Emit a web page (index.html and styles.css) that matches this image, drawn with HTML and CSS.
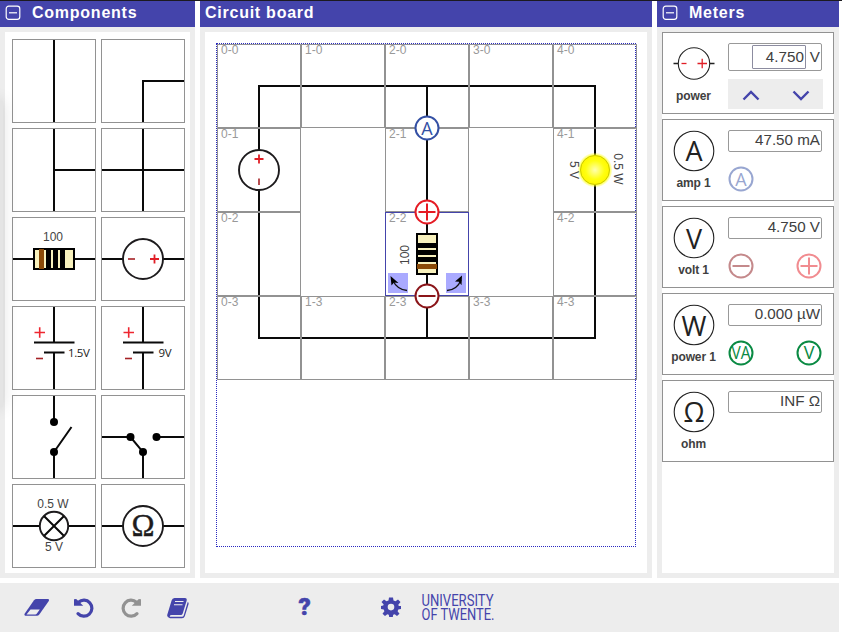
FILE: index.html
```
<!DOCTYPE html>
<html lang="en">
<head>
<meta charset="utf-8">
<title>Circuit lab</title>
<link rel="stylesheet" href="styles.css">
</head>
<body>
<svg class="defs" aria-hidden="true">
  <defs>
    <radialGradient id="glow"><stop offset="0" stop-color="#ffffb0"/><stop offset=".65" stop-color="#ffff10"/><stop offset="1" stop-color="#fff700"/></radialGradient>
    <radialGradient id="halo"><stop offset=".8" stop-color="#ffff20"/><stop offset="1" stop-color="#ffff20" stop-opacity="0"/></radialGradient>
    <g id="wire-v"><path class="wire" d="M0-41V41"/></g>
    <g id="wire-h"><path class="wire" d="M-41 0H41"/></g>
    <g id="corner"><path class="wire" d="M0 41V0H41"/></g>
    <g id="tee"><path class="wire" d="M-41 0H41M0 0V41"/></g>
    <g id="resistor">
      <path class="wire" d="M-41 0H41"/>
      <rect x="-20" y="-10" width="40" height="20" fill="#f8f1bd" stroke="#000" stroke-width="2"/>
      <path fill="#8b4a08" d="M-15-10h5v20h-5z"/>
      <path d="M-8-10h5v20h-5zM-1-10h5v20h-5zM6-10h5v20H6z"/>
      <text class="part" x="-1" y="-18">100</text>
    </g>
  </defs>
</svg>
<main class="workspace">
  <section class="panel panel-parts">
    <h2 class="title"><svg class="toggle" viewBox="0 0 16 16"><rect x="1.2" y="1.2" width="13.6" height="13.2" rx="2.6"/><path d="M4 7.8h8"/></svg>Components</h2>
    <div class="parts">
      <div class="tile"><svg viewBox="-41 -41 82 82"><use href="#wire-v"/></svg></div>
      <div class="tile"><svg viewBox="-41 -41 82 82"><use href="#corner"/></svg></div>
      <div class="tile"><svg viewBox="-41 -41 82 82"><path class="wire" d="M0-41V41M0 0H41"/></svg></div>
      <div class="tile"><svg viewBox="-41 -41 82 82"><path class="wire" d="M0-41V41M-41 0H41"/></svg></div>
      <div class="tile"><svg viewBox="-41 -41 82 82"><use href="#resistor"/></svg></div>
      <div class="tile"><svg viewBox="-41 -41 82 82"><path class="wire" d="M-41 0H41"/><circle class="body" r="20"/><path class="minus" d="M-15 0h7"/><path class="plus" d="M7 0h9M11.500-4.500v9"/></svg></div>
      <div class="tile"><svg viewBox="-41 -41 82 82"><path class="wire" d="M0-41V-6M0 5V41M-20-5.500H20.500M-10 4.500H10.500"/><path class="pole" d="M-19.500-15.500h10.500M-14.300-20.800v10.600"/><path class="minus" d="M-18 10.500h7"/><text class="volts" x="14" y="9">1.5V</text></svg></div>
      <div class="tile"><svg viewBox="-41 -41 82 82"><path class="wire" d="M0-41V-6M0 5V41M-20-5.500H20.500M-10 4.500H10.500"/><path class="pole" d="M-19.500-15.500h10.500M-14.300-20.800v10.600"/><path class="minus" d="M-18 10.500h7"/><text class="volts" x="15.500" y="9">9V</text></svg></div>
      <div class="tile"><svg viewBox="-41 -41 82 82"><path class="wire" d="M0-41V-15M0 41V15L17.500-10"/><circle cy="-15" r="4"/><circle cy="15" r="4"/></svg></div>
      <div class="tile"><svg viewBox="-41 -41 82 82"><path class="wire" d="M-41 0H-12.500L0 15V41M13.500 0H41"/><circle cx="-12.500" r="4"/><circle cx="13.500" r="4"/><circle cy="15" r="4"/></svg></div>
      <div class="tile"><svg viewBox="-41 -41 82 82"><path class="wire" d="M-41 0H41"/><circle class="body" r="14.200"/><path class="wire" d="M-9.800-9.800 9.800 9.800M9.800-9.800-9.800 9.800"/><text class="part" x="-1" y="-18">0.5 W</text><text class="part" x="0" y="25">5 V</text></svg></div>
      <div class="tile"><svg viewBox="-41 -41 82 82"><path class="wire" d="M-41 0H41"/><circle class="body" r="20"/><text class="omega" y="9.500">Ω</text></svg></div>
    </div>
  </section>

  <section class="panel panel-board">
    <h2 class="title">Circuit board</h2>
    <div class="board">
      <div class="field">
        <div class="grid">
          <div class="cell"><span>0-0</span><svg viewBox="-41 -41 82 82"><use href="#corner"/></svg></div>
          <div class="cell"><span>1-0</span><svg viewBox="-41 -41 82 82"><use href="#wire-h"/></svg></div>
          <div class="cell"><span>2-0</span><svg viewBox="-41 -41 82 82"><use href="#tee"/></svg></div>
          <div class="cell"><span>3-0</span><svg viewBox="-41 -41 82 82"><use href="#wire-h"/></svg></div>
          <div class="cell"><span>4-0</span><svg viewBox="-41 -41 82 82"><use href="#corner" transform="rotate(90)"/></svg></div>

          <div class="cell"><span>0-1</span><svg viewBox="-41 -41 82 82"><use href="#wire-v"/><circle class="body" r="20"/><path class="plus" d="M-4.500-11h9M0-15.500v9"/><path class="minus" d="M0 8.500v6.500"/></svg></div>
          <div></div>
          <div class="cell"><span>2-1</span><svg viewBox="-41 -41 82 82"><use href="#wire-v"/></svg></div>
          <div></div>
          <div class="cell"><span>4-1</span><svg viewBox="-41 -41 82 82"><use href="#wire-v"/><circle r="17.500" fill="url(#halo)"/><circle r="14.500" fill="url(#glow)" stroke="#c9c900"/><g transform="rotate(90)"><text class="part" x="-1" y="-18.500">0.5 W</text><text class="part" x="0" y="25">5 V</text></g></svg></div>

          <div class="cell"><span>0-2</span><svg viewBox="-41 -41 82 82"><use href="#wire-v"/></svg></div>
          <div></div>
          <div class="cell selected"><span>2-2</span><svg viewBox="-41 -41 82 82"><use href="#resistor" transform="rotate(-90)"/>
            <path class="rotate-bg" d="M-39 19h20v20h-20zM19 19h20v20H19z"/>
            <path class="rotate-arc" d="M-20 36.500C-28 36-32 31-34.500 26M20 36.500C28 36 32 31 34 26"/>
            <path d="M-36.500 22l1 9.500 2.500-3 4.500.500zM35 21.500l-7 6 4 .300 2.500 3.500z"/></svg></div>
          <div></div>
          <div class="cell"><span>4-2</span><svg viewBox="-41 -41 82 82"><use href="#wire-v"/></svg></div>

          <div class="cell"><span>0-3</span><svg viewBox="-41 -41 82 82"><use href="#corner" transform="rotate(-90)"/></svg></div>
          <div class="cell"><span>1-3</span><svg viewBox="-41 -41 82 82"><use href="#wire-h"/></svg></div>
          <div class="cell"><span>2-3</span><svg viewBox="-41 -41 82 82"><use href="#tee" transform="rotate(180)"/></svg></div>
          <div class="cell"><span>3-3</span><svg viewBox="-41 -41 82 82"><use href="#wire-h"/></svg></div>
          <div class="cell"><span>4-3</span><svg viewBox="-41 -41 82 82"><use href="#corner" transform="rotate(180)"/></svg></div>
        </div>
        <svg class="probe pin-amp blue" viewBox="-13 -13 26 26"><circle r="11.500"/><text y="6.500">A</text></svg>
        <svg class="probe pin-plus red" viewBox="-13 -13 26 26"><circle r="11.500"/><path d="M-8.500 0h17M0-8.500v17"/></svg>
        <svg class="probe pin-minus maroon" viewBox="-13 -13 26 26"><circle r="11.500"/><path d="M-8.500 0h17"/></svg>
      </div>
    </div>
  </section>

  <section class="panel panel-meters">
    <h2 class="title"><svg class="toggle" viewBox="0 0 16 16"><rect x="1.200" y="1.200" width="13.600" height="13.200" rx="2.600"/><path d="M4 7.800h8"/></svg>Meters</h2>
    <div class="meters">
      <div class="meter">
        <div class="face"><svg viewBox="-21 -21 42 42"><path class="lead" d="M-20.500-.500h4.500M16-.500h4.500"/><circle class="dial" cy="-.500" r="15.700"/><path class="minus thin" d="M-12.500-.500h5"/><path class="plus thin" d="M3.500-.500h9.500M8.200-5.200v9.500"/></svg><b>power</b></div>
        <div class="side"><div class="display tall"><span class="entry">4.750</span><span>V</span></div>
          <div class="stepper"><svg viewBox="0 0 18 11"><path d="M1.500 9.500 9 2l7.500 7.500"/></svg><svg viewBox="0 0 18 11"><path d="M1.500 1.500 9 9l7.500-7.500"/></svg></div></div>
      </div>
      <div class="meter">
        <div class="face"><svg viewBox="-21 -21 42 42"><circle class="dial" r="19.800"/><text y="9.800">A</text></svg><b>amp 1</b></div>
        <div class="side"><div class="display">47.50 mA</div>
          <div class="probes"><svg class="probe blue dim" viewBox="-13 -13 26 26"><circle r="11.500"/><text y="6.500">A</text></svg></div></div>
      </div>
      <div class="meter">
        <div class="face"><svg viewBox="-21 -21 42 42"><circle class="dial" r="19.800"/><text y="11">V</text></svg><b>volt 1</b></div>
        <div class="side"><div class="display">4.750 V</div>
          <div class="probes"><svg class="probe maroon dim" viewBox="-13 -13 26 26"><circle r="11.500"/><path d="M-8.500 0h17"/></svg><svg class="probe red dim" viewBox="-13 -13 26 26"><circle r="11.500"/><path d="M-8.500 0h17M0-8.500v17"/></svg></div></div>
      </div>
      <div class="meter">
        <div class="face"><svg viewBox="-21 -21 42 42"><circle class="dial" r="19.800"/><text y="11">W</text></svg><b>power 1</b></div>
        <div class="side"><div class="display">0.000 µW</div>
          <div class="probes"><svg class="probe green" viewBox="-13 -13 26 26"><circle r="11.500"/><text y="6" textLength="19" lengthAdjust="spacingAndGlyphs">VA</text></svg><svg class="probe green" viewBox="-13 -13 26 26"><circle r="11.500"/><text y="6">V</text></svg></div></div>
      </div>
      <div class="meter">
        <div class="face"><svg viewBox="-21 -21 42 42"><circle class="dial" r="19.800"/><text y="9.500">Ω</text></svg><b>ohm</b></div>
        <div class="side"><div class="display">INF Ω</div></div>
      </div>
    </div>
  </section>
</main>
<div class="drawer"></div>
<footer class="toolbar">
  <svg viewBox="0 583 550 49">
    <g class="ink">
      <path d="M36.500 599h11.800q1.200.500.500 2l-9.500 13.500q-1 1.300-2.500 1.300H25.200q-1.400-.500-.600-2l9.400-13.500q1-1.300 2.500-1.300z"/>
      <path fill="#eee" d="M30.500 609.500h9.300l-3.100 4.300q-.400.700-1.400.700h-8.800z"/>
      <path class="arc" d="M78.500 602.300A8 8 0 1 1 78 613.600"/><path d="M74 599.200l2.200-.200 7 6.800h-9.200z"/>
      <g class="off"><path class="arc" d="M136.500 602.300A8 8 0 1 0 137 613.600"/><path d="M141 599.200l-2.200-.200-7 6.800h9.200z"/></g>
      <path d="M174.500 598h10.700q2.200.400 1.500 2.500l-4 13q-.500 1.500-2 1.500h-9q-1.700 0-2 1.200 0 .600 1.300.600h11q1.200 0 1.700-1.300l4-13.500q1.300.500.900 2l-3.800 12.300q-.700 2-2.800 2h-12q-2.700-.3-2.900-3l4.500-14.800q.700-2.300 2.900-2.500z"/>
      <path fill="none" stroke="#eee" stroke-width="1.100" d="M175 601.500h8.500M174 604.700h8.500"/>
      <text class="help" x="304.500" y="615">?</text>
      <g transform="translate(391 607)">
        <path fill-rule="evenodd" d="M-2-9.500H2l.5 3 2 .8 2.500-1.800L9.500-5 7.300-2.200l.5 1.200H10V2l-2.700.4-.7 1.800L8.500 6.800 6 9 3.700 7.200 2.200 7.800 1.800 10h-3.600l-.4-2.200-1.500-.600L-6 9l-2.500-2.200 1.900-2.600-.7-1.800L-10 2v-3l2.200-.400.5-1.200L-9.500-5-7-7.500l2.500 1.800 2-.8zM0-3.200a3.300 3.300 0 1 0 0 6.600 3.300 3.300 0 0 0 0-6.600z"/>
      </g>
      <text class="brand"><tspan x="421.500" y="605.500" textLength="72" lengthAdjust="spacingAndGlyphs">UNIVERSITY</tspan><tspan x="421.500" y="619.700" textLength="73" lengthAdjust="spacingAndGlyphs">OF TWENTE.</tspan></text>
    </g>
  </svg>
</footer>
</body>
</html>
```
FILE: styles.css
```
* { box-sizing: border-box; }
body {
  margin: 0;
  height: 638px;
  overflow: hidden;
  position: relative;
  border-top: 1px solid #1c1a20;
  background: #fff;
  color: #404040;
  font-family: "Liberation Sans", Arial, sans-serif;
}
svg { display: block; }
.defs { position: absolute; width: 0; height: 0; }

.workspace { display: flex; gap: 5px; width: 839px; height: 577px; }
.panel { display: flex; flex-direction: column; padding: 0 5px 5px; background: #ededed; }
.panel-parts { width: 195px; }
.panel-board { width: 452px; }
.panel-meters { width: 182px; }
.title {
  flex: none;
  display: flex;
  align-items: center;
  height: 26px;
  margin: 0 -5px 5px;
  padding: 0 5px 2px;
  background: #4444ab;
  color: #fff;
  font-size: 16px;
  letter-spacing: .75px;
}
.toggle { width: 16px; height: 16px; margin-right: 11px; fill: none; stroke: #fff; stroke-width: 1.2; }

.parts {
  flex: 1;
  min-height: 0;
  display: grid;
  grid-template-columns: 84px 84px;
  grid-auto-rows: 84px;
  gap: 5px;
  padding: 7px 7px 0;
  background: #fff;
}
.tile { border: 1px solid #929292; }
.tile svg, .cell svg { width: 82px; height: 82px; }
.wire { fill: none; stroke: #0a0a0a; stroke-width: 2; }
.body { fill: #fff; stroke: #1d1b1d; stroke-width: 1.9; }
.plus { fill: none; stroke: #e01e26; stroke-width: 1.8; }
.pole { fill: none; stroke: #ee2730; stroke-width: 1.6; }
.minus { fill: none; stroke: #a52226; stroke-width: 1.6; }
.thin { stroke: #e01e26; stroke-width: 1.3; }
.part { font-size: 12px; text-anchor: middle; fill: #444; }
.volts { font: 11.5px "Open Sans", sans-serif; letter-spacing: -.4px; fill: #222; }
.omega { font: 31px "Liberation Serif", serif; text-anchor: middle; fill: #1d1b1d; stroke: #1d1b1d; stroke-width: .4; }

.board { flex: 1; padding: 11px; background: #fff; }
.field { position: relative; width: 420px; height: 504px; border: 1px dotted #2a2ac0; }
.grid { display: grid; width: 420px; grid-template-columns: repeat(5, 84px); grid-auto-rows: 84px; }
.cell { position: relative; border: 1px solid #929292; }
.cell span { position: absolute; left: 3px; top: -2px; font-size: 12px; line-height: 14px; color: #999; }
.selected { border-color: #4444ab; }
.rotate-bg { fill: #aaf; }
.rotate-arc { fill: none; stroke: #111; stroke-width: 1.3; }

.probe { width: 26px; height: 26px; fill: none; stroke-width: 2; }
.probe text { font: 18px "Open Sans", sans-serif; text-anchor: middle; stroke: none; }
.probe circle { fill: #fff; }
.blue { stroke: #3450a4; }
.blue text { fill: #3450a4; }
.red { stroke: #e51b24; }
.maroon { stroke: #8b1519; }
.green { stroke: #0a8a43; }
.green text { fill: #0a8a43; }
.dim { opacity: .5; }
.pin-amp, .pin-plus, .pin-minus { position: absolute; left: 197px; }
.pin-amp { top: 71px; }
.pin-plus { top: 155px; }
.pin-minus { top: 239px; }

.meters { flex: 1; display: flex; flex-direction: column; gap: 5px; background: #fff; }
.meter { display: flex; height: 82px; border: 1px solid #929292; }
.face { width: 61px; padding-top: 10px; display: flex; flex-direction: column; align-items: center; }
.face svg { width: 42px; height: 42px; }
.face text { font: 27px "Open Sans", sans-serif; text-anchor: middle; fill: #222; }
.face b { font-size: 12px; line-height: 14px; margin-top: 4px; letter-spacing: -.1px; }
.dial { fill: #fff; stroke: #222; stroke-width: 1.1; }
.lead { stroke: #222; stroke-width: 1.4; }
.side { margin-left: 4px; padding-top: 10px; width: 95px; }
.display {
  width: 94px;
  height: 22px;
  padding-right: 1px;
  border: 1px solid #999;
  border-radius: 2px;
  text-align: right;
  font-size: 15.2px;
  line-height: 17px;
}
.tall { display: flex; justify-content: flex-end; gap: 4px; height: 28px; padding: 1px 1px 1px 0; line-height: 24px; }
.entry { width: 54px; height: 24px; padding-right: 1px; border: 1px solid #8c8ca0; border-radius: 1px; line-height: 22px; }
.stepper { display: flex; gap: 32px; align-items: center; height: 30px; margin-top: 8px; padding: 2px 0 0 14px; background: #ededed; }
.stepper svg { width: 18px; height: 11px; fill: none; stroke: #4444ab; stroke-width: 2.4; }
.probes { display: flex; justify-content: space-between; margin: 14px 1px 0 0; }

.drawer { position: absolute; left: -10px; top: 100px; width: 13px; height: 306px; background: #e4e4e4; box-shadow: 0 0 16px rgba(0, 0, 0, .13); }

.toolbar { width: 839px; height: 49px; margin-top: 5px; background: #ededed; }
.toolbar svg { width: 550px; height: 49px; }
.ink { fill: #4444ab; }
.arc { fill: none; stroke: #4444ab; stroke-width: 3.2; stroke-linecap: round; }
.off { fill: #929292; }
.off .arc { stroke: #929292; }
.help { font: 900 24px Roboto, sans-serif; text-anchor: middle; stroke: #4444ab; stroke-width: .5; }
.brand { font: 400 16px Roboto, sans-serif; }
```
